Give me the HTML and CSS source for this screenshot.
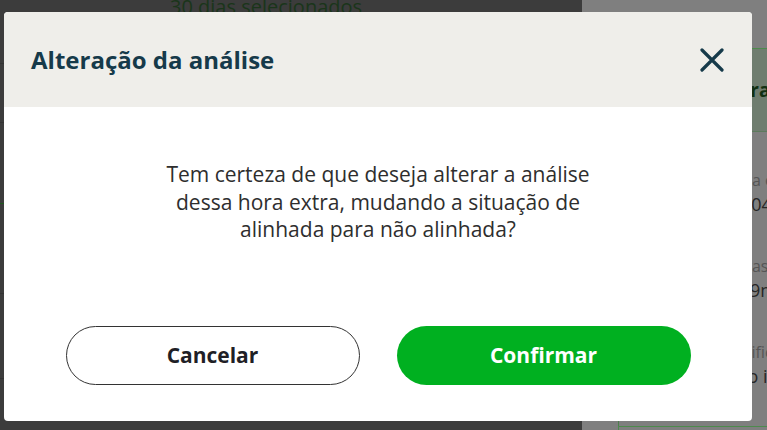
FILE: index.html
```html
<!DOCTYPE html>
<html>
<head>
    <title>Alteração da análise</title>
    <link rel="stylesheet" href="styles.css">
</head>
<body>
    <div class="page">
        <div class="main">
            <div class="period">30 dias selecionados</div>
            <div class="row"></div>
            <div class="row"></div>
            <div class="row active"></div>
            <div class="row"></div>
            <div class="row"></div>
            <div class="row last">
                <span class="date">09/04/2025</span>
                <span class="time">03:34</span>
            </div>
        </div>
        <div class="side">
            <div class="card">
                <div class="card-head">Hora extra</div>
                <div class="field">
                    <div class="label">Hora extra</div>
                    <div class="value">09/04/2025</div>
                </div>
                <div class="field">
                    <div class="label">Horas realizadas</div>
                    <div class="value">1h 9min</div>
                </div>
                <div class="field">
                    <div class="label">Justificativa</div>
                    <div class="value">Não informada</div>
                </div>
            </div>
            <div class="card next"></div>
        </div>
    </div>

    <div class="modal">
        <div class="modal-head">
            <h2>Alteração da análise</h2>
            <button class="close" aria-label="Fechar">
                <svg width="24" height="24" viewBox="0 0 24 24">
                    <path d="M2 2 L22 22 M22 2 L2 22" stroke="#163a4a" stroke-width="3.2" stroke-linecap="round" fill="none"/>
                </svg>
            </button>
        </div>
        <div class="modal-body">
            <p>Tem certeza de que deseja alterar a análise<br>dessa hora extra, mudando a situação de<br>alinhada para não alinhada?</p>
            <div class="actions">
                <button class="btn cancel">Cancelar</button>
                <button class="btn confirm">Confirmar</button>
            </div>
        </div>
    </div>
</body>
</html>
```

FILE: styles.css
```css
body { margin: 0; font-family: "Open Sans", "Noto Sans", sans-serif; overflow: hidden; }

/* page behind the dialog (already dimmed) */
.page { display: flex; height: 430px; background-color: #7f7f7f; }
.main { flex: none; width: 582px; background-color: #3c3c3c; }
.period { height: 20px; margin-top: -6px; padding-left: 170px; font-size: 20px; line-height: 26px; color: #1a351a; }
.row { height: 59px; border-bottom: 1px solid #333; }
.row:nth-child(2) { height: 49px; }
.row:nth-child(3) { height: 58px; }
.row:nth-child(4) { height: 80px; border-bottom-color: #1f5a1f; }
.row:nth-child(5) { height: 89px; }
.row:nth-child(6) { height: 84px; }
.row.last { border: none; display: flex; padding-top: 10px; font-size: 20px; color: #1e1e1e; }
.date { margin-left: 180px; }
.time { margin-left: 137px; }

.side { flex: 1; min-width: 0; padding: 48px 0 0 36px; display: flex; flex-direction: column; overflow: hidden; }
.card { height: 377px; border-left: 1px solid #4d7e4d; border-top: 1px solid #4d8a4d; white-space: nowrap; }
.card-head { height: 82px; padding-left: 105px; display: flex; align-items: center; background-color: #6f7d6f; border-bottom: 1px solid #5d7a5d; font-weight: 700; font-size: 19px; color: #123012; }
.field { padding: 28px 0 0 105px; height: 58px; }
.field:nth-child(2) { padding-top: 37px; }
.label { font-size: 16px; color: #555; }
.value { font-size: 18px; line-height: 26px; color: #262626; }
.card.next { flex: 1; border-top: 1px solid #4d8a4d; border-left: 1px solid #4d8a4d; }

/* dialog */
.modal { position: absolute; left: 4px; top: 12px; width: 748px; height: 409px; background: #fff; border-radius: 4px; overflow: hidden; display: flex; flex-direction: column; }
.modal-head { height: 95px; background-color: #efeeea; display: flex; align-items: center; justify-content: space-between; padding: 0 28px 0 27px; }
.modal-head h2 { margin: 0; font-size: 24px; font-weight: 700; color: #163a4a; }
.close { border: none; background: none; padding: 0; width: 24px; height: 24px; display: flex; }
.modal-body { flex: 1; display: flex; flex-direction: column; align-items: center; }
.modal-body p { margin: 54px 0 0; text-align: center; font-size: 21px; line-height: 27.5px; color: #2e2e2e; }
.actions { margin-top: 82px; display: flex; gap: 37px; }
.btn { width: 294px; height: 59px; border-radius: 30px; font-family: inherit; font-size: 21px; font-weight: 700; cursor: pointer; }
.cancel { background: #fff; border: 1px solid #333; color: #1f1f26; }
.confirm { background-color: #00b020; border: none; color: #fff; }
```
